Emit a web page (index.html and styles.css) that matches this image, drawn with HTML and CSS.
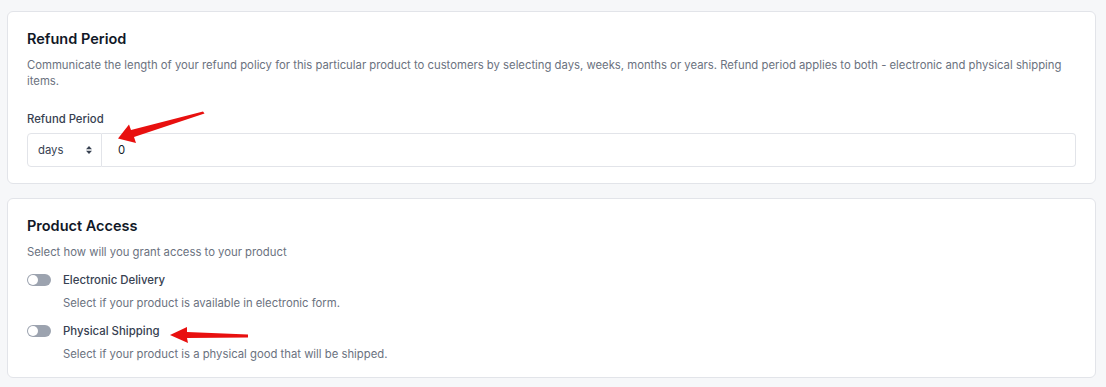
FILE: index.html
```html
<!DOCTYPE html>
<html>
<head>
<meta charset="utf-8">
<link rel="stylesheet" href="styles.css">
</head>
<body>
<div class="page">
  <section class="card">
    <h2 class="title">Refund Period</h2>
    <p class="desc">Communicate the length of your refund policy for this particular product to customers by selecting days, weeks, months or years. Refund period applies to both - electronic and physical shipping items.</p>
    <div class="label">Refund Period</div>
    <div class="input-group">
      <div class="select">
        <span>days</span>
        <svg class="caret" width="8" height="10" viewBox="0 0 8 10"><path d="M4 1 L7 4.2 H1 Z M4 9 L7 5.8 H1 Z" fill="#374151"/></svg>
      </div>
      <div class="input">0</div>
    </div>
  </section>
  <section class="card">
    <h2 class="title">Product Access</h2>
    <p class="desc">Select how will you grant access to your product</p>
    <div class="option">
      <span class="toggle"><span class="knob"></span></span>
      <span class="opt-label">Electronic Delivery</span>
    </div>
    <p class="opt-desc">Select if your product is available in electronic form.</p>
    <div class="option">
      <span class="toggle"><span class="knob"></span></span>
      <span class="opt-label">Physical Shipping</span>
    </div>
    <p class="opt-desc">Select if your product is a physical good that will be shipped.</p>
  </section>
</div>
<svg class="arrows" width="1106" height="387" viewBox="0 0 1106 387">
  <path d="M203 111.5 L204.5 113.5 L134 137 L136 143 L118 138.5 L129 124.5 L131 130 Z" fill="#e8100f"/>
  <path d="M248 334.5 L248 337.5 L187 338 L188 343 L170 335 L187 327 L187 332 Z" fill="#e8100f"/>
</svg>
</body>
</html>
```
FILE: styles.css
```css
* { box-sizing: border-box; }
html, body { margin: 0; padding: 0; }
body {
  background: #f6f7f9;
  font-family: Inter, "Noto Sans", sans-serif;
  color: #111827;
  width: 1106px;
  height: 387px;
  overflow: hidden;
  position: relative;
}
.page {
  padding: 11px 10px 0 7px;
  display: flex;
  flex-direction: column;
  gap: 14px;
}
.card {
  background: #fff;
  border: 1px solid #e2e4e9;
  border-radius: 6px;
  padding: 17px 19px 16px 19px;
}
.card + .card { padding-bottom: 15px; }
.title {
  margin: 0;
  font-size: 14.5px;
  line-height: 20px;
  font-weight: 600;
  color: #111827;
}
.desc {
  margin: 8px 0 0;
  font-size: 11.3px;
  line-height: 16px;
  color: #6b7280;
}
.label {
  margin-top: 22px;
  font-size: 11.3px;
  line-height: 16px;
  font-weight: 500;
  color: #374151;
}
.input-group {
  margin-top: 6px;
  display: flex;
  height: 34px;
}
.select {
  width: 75px;
  border: 1px solid #e2e4e9;
  border-radius: 4px 0 0 4px;
  display: flex;
  align-items: center;
  justify-content: space-between;
  padding: 0 8px 0 10px;
  font-size: 11.3px;
  color: #374151;
}
.caret { display: block; }
.input {
  flex: 1;
  border: 1px solid #e2e4e9;
  border-left: none;
  border-radius: 0 4px 4px 0;
  display: flex;
  align-items: center;
  padding-left: 16px;
  font-size: 11.3px;
  color: #111827;
}
.option {
  margin-top: 12px;
  display: flex;
  align-items: center;
  height: 16px;
}
.toggle {
  width: 24px;
  height: 12px;
  border-radius: 6px;
  background: #9ca3af;
  position: relative;
  flex: none;
}
.knob {
  position: absolute;
  left: 1px;
  top: 1px;
  width: 10px;
  height: 10px;
  border-radius: 50%;
  background: #fff;
}
.opt-label {
  margin-left: 12px;
  font-size: 11.4px;
  font-weight: 500;
  color: #374151;
  line-height: 16px;
}
.opt-desc {
  margin: 7px 0 0 36px;
  font-size: 11.3px;
  line-height: 16px;
  color: #6b7280;
}
.arrows {
  position: absolute;
  left: 0;
  top: 0;
  pointer-events: none;
}
```
